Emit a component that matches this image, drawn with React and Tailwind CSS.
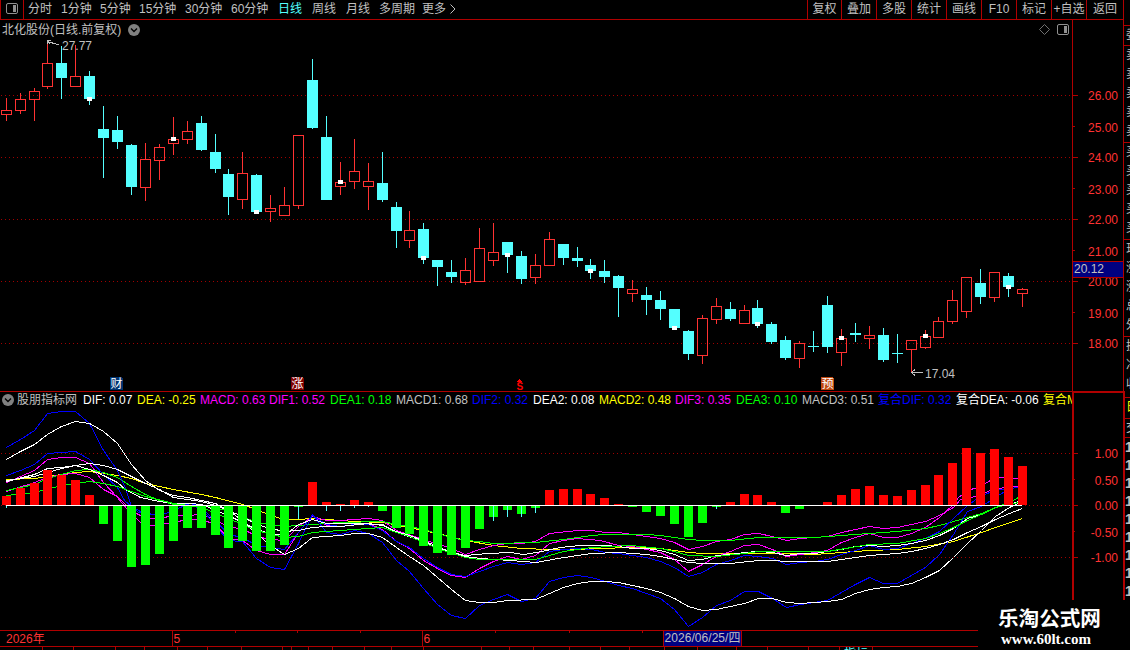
import clsx from 'clsx';

const RED = '#b00000';
const UP = '#ff3232';
const DOWN = '#54ffff';

const periods = [
  { label: '分时', width: 'w-[33px]' },
  { label: '1分钟', width: 'w-[39px]' },
  { label: '5分钟', width: 'w-[39px]' },
  { label: '15分钟', width: 'w-[46px]' },
  { label: '30分钟', width: 'w-[46px]' },
  { label: '60分钟', width: 'w-[47px]' },
  { label: '日线', width: 'w-[34px]', active: true },
  { label: '周线', width: 'w-[34px]' },
  { label: '月线', width: 'w-[33px]' },
  { label: '多周期', width: 'w-[43px]' },
  { label: '更多', width: 'w-[27px]' },
];

const tools = [
  { label: '复权', width: 'w-[34px]' },
  { label: '叠加', width: 'w-[35px]' },
  { label: '多股', width: 'w-[35px]' },
  { label: '统计', width: 'w-[35px]' },
  { label: '画线', width: 'w-[35px]' },
  { label: 'F10', width: 'w-[35px]' },
  { label: '标记', width: 'w-[35px]' },
  { label: '+自选', width: 'w-[35px]' },
  { label: '返回', width: 'w-[38px] border-r' },
];

const indicators = [
  { text: 'DIF: 0.07', cls: 'w-[54px] text-white' },
  { text: 'DEA: -0.25', cls: 'w-[63px] text-[#ffff00]' },
  { text: 'MACD: 0.63', cls: 'w-[69px] text-[#ff00ff]' },
  { text: 'DIF1: 0.52', cls: 'w-[61px] text-[#ff00ff]' },
  { text: 'DEA1: 0.18', cls: 'w-[66px] text-[#00ff00]' },
  { text: 'MACD1: 0.68', cls: 'w-[76px] text-[#c0c0c0]' },
  { text: 'DIF2: 0.32', cls: 'w-[61px] text-[#0000ff]' },
  { text: 'DEA2: 0.08', cls: 'w-[66px] text-white' },
  { text: 'MACD2: 0.48', cls: 'w-[76px] text-[#ffff00]' },
  { text: 'DIF3: 0.35', cls: 'w-[61px] text-[#ff00ff]' },
  { text: 'DEA3: 0.10', cls: 'w-[66px] text-[#00ff00]' },
  { text: 'MACD3: 0.51', cls: 'w-[76px] text-[#c0c0c0]' },
  { text: '复合DIF: 0.32', cls: 'w-[78px] text-[#0000ff]' },
  { text: '复合DEA: -0.06', cls: 'w-[87px] text-white' },
  { text: '复合MACD', cls: 'w-[80px] text-[#ffff00]' },
];

// [up, high, bodyTop, bodyBottom, low, marker]
const candles = [
  [1, 98, 110, 114, 120], [1, 93, 99, 110, 113], [1, 88, 91, 99, 120], [1, 41, 63, 86, 88],
  [0, 46, 63, 77, 98], [1, 45, 76, 86, 86], [0, 71, 76, 98, 104, 97], [0, 106, 129, 137, 177],
  [0, 116, 130, 141, 148], [0, 144, 145, 186, 194], [1, 143, 159, 187, 200], [1, 144, 147, 160, 179],
  [1, 117, 139, 143, 154, 137], [1, 121, 131, 139, 143], [0, 116, 123, 149, 150], [0, 134, 152, 168, 172],
  [0, 169, 174, 196, 214], [1, 152, 173, 199, 208], [0, 174, 175, 211, 211, 210], [1, 195, 208, 211, 221],
  [1, 187, 205, 215, 215], [1, 135, 135, 205, 208], [0, 59, 80, 127, 128], [0, 116, 137, 199, 199],
  [1, 162, 182, 186, 194, 180], [1, 139, 171, 181, 188], [1, 163, 181, 186, 209], [0, 152, 183, 199, 201],
  [0, 202, 207, 230, 247], [1, 211, 230, 240, 247], [0, 223, 229, 257, 263, 256], [0, 260, 260, 266, 285],
  [0, 260, 272, 276, 282], [1, 258, 270, 282, 284], [1, 228, 248, 281, 281], [1, 223, 252, 260, 265],
  [0, 242, 242, 254, 272, 253], [0, 251, 256, 278, 283], [1, 254, 265, 277, 283], [1, 232, 239, 265, 265],
  [0, 244, 244, 257, 264], [0, 247, 258, 260, 266], [0, 259, 265, 270, 278, 269], [0, 260, 271, 276, 282],
  [0, 275, 276, 287, 316], [1, 280, 289, 293, 301], [0, 287, 295, 299, 314], [0, 291, 300, 308, 319],
  [0, 309, 309, 327, 327, 326], [0, 330, 331, 353, 359], [1, 315, 318, 355, 363], [1, 298, 306, 319, 323],
  [0, 302, 309, 318, 320], [1, 305, 310, 323, 323], [0, 300, 308, 323, 327, 322], [0, 322, 324, 341, 343],
  [0, 336, 340, 357, 359], [1, 341, 343, 358, 367], [0, 331, 346, 346, 351], [0, 296, 305, 346, 352],
  [1, 329, 338, 352, 365, 336], [0, 323, 333, 334, 341], [1, 326, 335, 338, 348], [0, 328, 335, 359, 361],
  [0, 334, 353, 353, 362], [1, 340, 340, 349, 371], [1, 330, 336, 347, 348, 334], [1, 317, 321, 337, 337],
  [1, 290, 300, 321, 323], [1, 277, 277, 311, 317], [0, 269, 283, 296, 303], [1, 272, 272, 297, 301],
  [0, 273, 276, 286, 296, 285], [1, 288, 289, 293, 306],
];

// end of every histogram bar, the zero line lies at 505
const bars = [
  496, 488, 483, 470, 475, 480, 495, 524, 541, 567, 565, 554, 541, 528, 528, 535, 548, 541, 551,
  551, 545, 507, 482, 502, 504, 500, 502, 511, 528, 534, 546, 553, 555, 548, 529, 517, 510, 514,
  508, 490, 489, 489, 494, 498, 504, 507, 512, 516, 524, 537, 523, 507, 502, 494, 495, 502, 513,
  509, 505, 502, 495, 489, 486, 495, 496, 490, 485, 475, 463, 448, 453, 449, 457, 466,
];

const needles = { 0: 508, 21: 519, 23: 511, 24: 511, 25: 508, 26: 507, 35: 521, 36: 517, 37: 517, 38: 513, 51: 509 };

const curves = [
  { color: '#ffff00', points: '6,479 34,478 47,476 75,472 89,471 103,473 117,475 131,478 145,483 159,486 173,489 201,494 215,497 242,504 256,509 270,515 284,519 298,519 312,518 326,519 354,521 382,522 409,527 437,533 465,540 493,545 521,548 549,549 577,549 600,548 630,547 660,548 688,552 702,553 744,553 786,553 814,554 841,552 869,550 897,549 925,546 953,541 981,532 995,527 1022,518' },
  { color: '#ff00ff', points: '6,482 20,476 34,470 47,459 61,457 75,457 89,463 103,482 117,497 131,514 145,526 159,524 173,522 187,519 201,519 215,524 228,538 242,540 256,550 270,554 284,554 298,532 312,515 326,525 340,526 368,523 382,529 396,541 409,548 423,560 437,568 451,575 465,577 479,568 493,561 507,556 521,559 535,555 549,543 563,540 577,538 600,540 618,545 632,546 646,549 660,552 674,559 688,571 702,564 716,556 730,551 744,545 758,544 772,549 786,556 800,554 814,552 827,550 841,542 855,537 869,533 883,537 897,537 911,533 925,527 939,517 953,504 958,497 967,490 977,487 990,480 1000,477 1018,478' },
  { color: '#ff00ff', points: '6,491 34,482 47,477 61,474 75,473 89,477 103,489 117,496 131,510 145,518 159,518 173,515 187,515 201,514 215,519 228,527 242,528 256,536 270,539 284,540 298,526 312,516 326,520 340,520 368,518 382,520 396,530 423,539 451,548 465,554 479,549 493,545 507,543 521,543 535,541 549,533 577,530 591,530 605,532 618,532 646,536 660,538 674,542 688,549 702,546 716,541 730,539 744,534 758,533 772,536 786,540 800,538 827,536 841,532 855,529 869,526 883,528 897,527 911,524 925,521 939,515 953,507 960,499 975,496 990,490 1004,487 1018,486' },
  { color: '#00ff00', points: '6,490 34,484 47,478 61,474 75,470 89,469 103,472 117,477 131,486 145,494 159,500 173,504 201,505 228,510 242,516 256,522 284,526 312,524 340,522 382,521 396,524 409,526 423,529 437,533 451,537 465,540 479,541 493,543 535,542 563,539 591,535 605,534 646,534 660,535 674,537 688,539 702,540 730,540 758,537 786,537 814,537 841,535 869,533 897,531 925,528 939,525 953,521 967,517 981,513 995,507 1009,502 1018,497' },
  { color: '#0000ff', points: '6,475 20,470 34,464 47,453 61,452 75,451 89,459 103,474 117,487 124,500 131,506 140,511 152,514 165,513 173,510 187,504 201,508 215,520 228,534 242,537 256,545 270,547 284,549 298,532 312,515 326,524 340,526 354,524 368,524 382,530 396,541 409,547 423,558 437,567 451,574 465,576 479,571 493,566 507,562 521,564 535,562 549,551 563,549 577,548 591,549 605,552 618,553 632,555 646,557 660,561 674,567 688,576 702,572 716,564 730,560 744,555 758,556 772,558 786,564 800,562 814,561 827,559 841,554 855,550 869,545 883,549 897,548 911,543 925,538 939,531 953,518 967,505 981,495 995,490 1009,488 1018,487' },
  { color: '#0000ff', points: '6,447 20,439 34,430 47,413 61,411 75,411 89,423 103,450 117,470 125,488 131,506 138,512 150,514 165,513 180,507 187,503 195,504 205,513 215,525 225,537 236,541 242,541 256,558 270,567 284,569 298,543 312,514 326,532 340,534 354,530 368,533 382,542 396,560 409,571 423,588 437,604 451,615 465,618 479,605 493,599 507,594 521,601 535,598 549,581 563,577 577,575 591,577 605,581 618,585 632,588 646,593 660,598 674,609 688,626 702,617 716,605 730,600 744,591 758,591 772,598 786,607 800,604 827,600 841,592 855,584 869,577 883,583 897,583 911,575 925,567 939,554 953,534 967,511 981,506 995,497 1009,488 1018,487' },
  { color: '#ffffff', points: '6,459 20,451 34,444 47,434 61,426 75,421 89,423 103,431 117,443 131,464 145,480 159,490 173,495 187,497 201,500 215,503 228,510 242,520 256,533 270,545 284,554 298,548 312,537 326,536 340,535 354,533 368,533 382,537 396,547 409,556 423,565 437,577 451,589 465,600 479,602 493,602 507,600 535,599 549,593 563,587 577,583 591,581 605,581 618,582 632,585 646,588 660,592 674,598 688,606 702,610 716,609 730,606 744,603 758,598 772,598 786,602 800,603 827,601 841,599 855,593 869,589 883,587 897,586 911,583 925,577 939,570 953,557 967,543 981,530 995,516 1009,507 1018,503' },
  { color: '#ffffff', points: '6,480 20,478 34,476 47,472 61,468 75,465 89,463 103,465 117,469 131,476 145,483 159,489 173,497 201,501 215,505 228,510 242,516 256,524 270,528 284,531 298,530 312,527 326,526 340,526 368,523 382,525 396,531 409,535 423,540 437,546 451,552 465,556 480,558 510,560 536,562 557,558 591,553 618,552 632,553 646,554 660,556 674,559 688,562 702,563 730,563 758,560 772,560 786,561 827,561 841,559 869,555 897,553 911,551 925,548 939,544 953,539 967,532 981,526 995,519 1009,513 1022,508' },
  { color: '#ffffff', points: '6,481 34,474 47,468 61,467 75,465 89,469 103,475 117,482 125,489 140,497 159,501 173,503 190,503 201,504 228,515 242,522 256,529 270,533 284,535 298,524 312,519 326,523 354,523 382,524 396,532 423,541 437,548 451,552 465,555 487,553 510,552 523,554 536,552 560,547 580,545 605,545 618,546 632,548 646,548 660,550 674,554 688,560 702,559 716,555 730,554 744,552 758,551 772,552 786,555 800,553 814,553 827,551 841,549 855,546 869,545 883,546 897,545 911,543 925,540 939,535 953,528 967,518 981,514 995,507 1009,504 1018,501' },
  { color: '#00ff00', points: '6,495 34,492 61,485 89,481 103,483 117,486 131,491 145,496 173,503 201,507 228,518 256,530 284,537 298,536 312,532 340,530 382,527 396,532 409,536 437,548 465,557 479,559 535,559 563,551 591,547 630,545 660,548 674,551 688,555 716,556 744,553 758,551 800,551 827,551 869,544 897,543 925,538 939,533 953,527 967,520 981,514 995,507 1018,502' },
];

const priceLabels = [
  ['26.00', 95, 100], ['25.00', 126, 132], ['24.00', 157, 162], ['23.00', 188, 194], ['22.00', 219, 224],
  ['21.00', 250, 256], ['20.00', 281, 286], ['19.00', 312, 318], ['18.00', 343, 348],
];

const macdLabels = [
  ['1.00', 453, 458], ['0.50', 479, 485], ['0.00', 505, 510], ['-0.50', 531, 537], ['-1.00', 557, 562],
];

const quoteGroups = [
  { cls: 'h-[26px]', rows: [] },
  { cls: 'h-[20px]', rows: ['委'] },
  { cls: 'h-[97px]', rows: ['卖', '卖', '卖', '卖', '卖'] },
  { cls: 'h-[97px]', rows: ['买', '买', '买', '买', '买'] },
  { cls: 'h-[97px]', rows: ['现', '涨', '涨', '总', '外'] },
  { cls: 'h-[61px]', rows: ['换', '净', '收'] },
  { cls: 'h-[21px] text-[#ffff00]', rows: ['日'] },
  { cls: 'h-[19px]', rows: ['交'] },
];

const footerTabs = [
  'w-[43px]', 'w-[31px]', 'w-[42px]', 'w-[29px]', 'w-[33px]', 'w-[30px]', 'w-[34px]', 'w-[41px]', 'w-[9px]',
  'w-[17px]', 'w-[24px]', 'w-[32px]', 'w-[27px]', 'w-[32px]', 'w-[58px]', 'w-[28px]', 'w-[24px]', 'w-[36px]',
  'w-[31px]', 'w-[29px]', 'w-[35px]', 'w-[33px]', 'w-[39px]', 'w-[31px]', 'w-[41px]', 'w-[31px]', 'w-[33px]',
];

const candleX = (i) => Math.floor(6.2 + i * 13.922);

const ChevronBadge = () => (
  <svg width="12" height="12" viewBox="0 0 12 12" className="shrink-0">
    <circle cx="6" cy="6" r="6" fill="#808080" />
    <path d="M3 4.5 L6 7.5 L9 4.5" fill="none" stroke="#000" strokeWidth="1.4" />
  </svg>
);

const PanelIcon = () => (
  <svg width="12" height="12" viewBox="0 0 12 12" className="shrink-0">
    <rect x="0.5" y="0.5" width="11" height="10" rx="1.5" fill="none" stroke="#909090" />
    <rect x="7" y="2" width="3" height="7" fill="#909090" />
  </svg>
);

const Toolbar = () => (
  <div className="flex h-5 shrink-0 border-b border-[#b00000] text-[12px] leading-[19px] text-[#c0c0c0]">
    <div className="flex w-6 items-center justify-center border-x border-[#b00000] pb-px">
      <PanelIcon />
    </div>
    <div className="flex flex-1 pl-1">
      {periods.map((p) => (
        <span key={p.label} className={clsx('shrink-0 whitespace-nowrap', p.width, p.active && 'text-[#54ffff]')}>
          {p.label}
        </span>
      ))}
      <svg width="8" height="10" viewBox="0 0 8 10" className="mt-1">
        <path d="M1.5 0.5 L6 5 L1.5 9.5" fill="none" stroke="#c0c0c0" />
      </svg>
    </div>
    <div className="flex">
      {tools.map((t) => (
        <span key={t.label} className={clsx('shrink-0 whitespace-nowrap border-l border-[#b00000] text-center', t.width)}>
          {t.label}
        </span>
      ))}
    </div>
  </div>
);

const GridLines = ({ levels }) =>
  levels.map((y) => (
    <line key={y} x1="1" x2="1072" y1={y + 0.5} y2={y + 0.5} stroke="#a00000" strokeDasharray="1 3" />
  ));

const Tag = ({ x, fill, text }) => (
  <g>
    <path d={`M${x} 377 h11 l2 2 v11 h-13 z`} fill={fill} />
    <text x={x + 0.5} y="388" fontSize="12" fill="#fff">{text}</text>
  </g>
);

const PriceChart = () => (
  <svg width="1072" height="353" viewBox="0 38 1072 353" className="block" shapeRendering="crispEdges">
    <GridLines levels={[95, 157, 219, 281, 343]} />
    {candles.map(([up, high, top, bottom, low, marker], i) => {
      const x = candleX(i);
      const color = up ? UP : DOWN;
      return (
        <g key={i}>
          {top > high && <rect x={x} y={high} width="1" height={top - high} fill={color} />}
          {low > bottom && <rect x={x} y={bottom + 1} width="1" height={low - bottom} fill={color} />}
          {up ? (
            <rect x={x - 4.5} y={top + 0.5} width="10" height={bottom - top} fill="none" stroke={color} />
          ) : (
            <rect x={x - 5} y={top} width="11" height={bottom - top + 1} fill={color} />
          )}
          {marker && <rect x={x - 2} y={marker} width="5" height="4" fill="#fff" />}
        </g>
      );
    })}
    <g fill="none" stroke="#c0c0c0">
      <path d="M47.5 41.5 L59 45 M51 40.5 H47.5 V44 M48 42 L50 44" />
      <path d="M911.5 372.5 H923 M915 369.5 L911.5 372.5 L915 375.5" />
    </g>
    <g fill="#c0c0c0" fontSize="12">
      <text x="62" y="50">27.77</text>
      <text x="925" y="378">17.04</text>
    </g>
    <Tag x={110} fill="#003370" text="财" />
    <Tag x={291} fill="#800000" text="涨" />
    <path d="M519.5 379 l2.5 2.5 h-5 z" fill="#ff0000" />
    <text x="516.5" y="390" fontSize="10" fontWeight="bold" fill="#ff0000">S</text>
    <Tag x={821} fill="#c04810" text="预" />
  </svg>
);

const MacdChart = () => (
  <svg width="1072" height="222" viewBox="0 408 1072 222" className="block" shapeRendering="crispEdges">
    <GridLines levels={[453, 505, 557]} />
    {curves.map((c, i) => (
      <polyline key={i} points={c.points} transform="translate(0.5 0.5)" fill="none" stroke={c.color} />
    ))}
    {bars.map((y, i) => (
      <rect
        key={i}
        x={candleX(i) - 4}
        y={Math.min(y, 505)}
        width="9"
        height={Math.abs(y - 505)}
        fill={y < 505 ? '#ff0000' : '#00ff00'}
      />
    ))}
    {Object.entries(needles).map(([i, y]) => (
      <rect key={i} x={candleX(Number(i))} y="506" width="1" height={y - 506} fill={DOWN} />
    ))}
    <rect x="6" y="505" width="1016" height="1" fill="#fff" />
  </svg>
);

const AxisLabels = ({ labels, major }) =>
  labels.map(([label, tick, baseline]) => (
    <g key={label}>
      <rect x="1073" y={tick} width={major.includes(label) ? 5 : 2} height="1" fill={RED} />
      <text x="1118" y={baseline} textAnchor="end" fontSize="12" fill={UP}>{label}</text>
    </g>
  ));

const PriceAxis = () => (
  <div className="relative w-[52px] shrink-0 border-x border-[#b00000]">
    <svg width="50" height="371" viewBox="1073 20 50 371" className="block">
      <AxisLabels labels={priceLabels} major={['26.00', '24.00', '22.00', '20.00', '18.00']} />
    </svg>
    <div className="absolute left-0 top-[241px] h-[17px] w-[50px] border-y border-[#b00000] bg-[#000080] pl-px text-[12px] leading-[15px] text-[#c0c0c0]">
      20.12
    </div>
  </div>
);

const MacdAxis = () => (
  <div className="h-[209px] w-[53px] shrink-0 border-2 border-b-0 border-[#b00000]">
    <svg width="49" height="206" viewBox="1074 393 49 206" className="block">
      <AxisLabels labels={macdLabels} major={['1.00', '0.00', '-1.00']} />
    </svg>
  </div>
);

const QuoteStrip = () => (
  <div className="w-[6px] shrink-0 overflow-hidden text-[12px] leading-[19px] text-[#c0c0c0]">
    {quoteGroups.map((g, i) => (
      <div key={i} className={clsx('overflow-hidden border-b border-[#b00000] pl-[2px]', g.cls)}>
        {g.rows.map((row, j) => (
          <div key={j} className="w-4">{row}</div>
        ))}
      </div>
    ))}
    <div className="pl-[1px] text-[14px] font-bold leading-[18px]">
      {['14', '14', '14', '14', '14', '14', '14', '14', '14'].map((t, i) => (
        <div key={i}>{t}</div>
      ))}
    </div>
  </div>
);

const TimeAxis = () => (
  <div className="h-[17px] w-[978px] shrink-0 border-y border-[#b00000]">
    <svg width="978" height="15" viewBox="0 631 978 15" className="block">
      {[235, 297, 360, 495, 569, 642].map((x) => (
        <rect key={x} x={x} y="631" width="1" height="2" fill={RED} />
      ))}
      <rect x="172" y="631" width="1" height="15" fill={RED} />
      <rect x="422" y="631" width="1" height="15" fill={RED} />
      <g fill={UP} fontSize="12">
        <text x="6" y="643">2026年</text>
        <text x="173.5" y="643">5</text>
        <text x="423.5" y="643">6</text>
      </g>
      <rect x="663" y="631" width="79" height="15" fill="#000080" />
      <rect x="663" y="631" width="1" height="15" fill={RED} />
      <rect x="741" y="631" width="1" height="15" fill={RED} />
      <text x="664.5" y="642" fontSize="12" fill="#c0c0c0" textLength="76">2026/06/25/四</text>
    </svg>
  </div>
);

export default function App() {
  return (
    <div className="relative flex h-[650px] w-[1130px] flex-col overflow-hidden bg-black font-['Liberation_Sans','Noto_Sans_CJK_SC',sans-serif] text-[#c0c0c0]">
      <div className="flex min-h-0 flex-1">
        <div className="flex w-[1124px] shrink-0 flex-col">
          <Toolbar />
          <div className="flex h-[371px] shrink-0">
            <div className="w-[1072px] shrink-0">
              <div className="flex h-[18px] items-center pl-[2px] pt-px text-[12px]">
                <span className="mr-[6px] w-[120px] whitespace-nowrap">北化股份(日线.前复权)</span>
                <ChevronBadge />
                <svg width="11" height="11" viewBox="0 0 11 11" className="ml-auto mr-[7px]">
                  <path d="M5.5 0.5 L10.5 5.5 L5.5 10.5 L0.5 5.5 Z" fill="none" stroke="#707070" />
                </svg>
                <div className="mr-[3px]">
                  <PanelIcon />
                </div>
              </div>
              <PriceChart />
            </div>
            <PriceAxis />
          </div>
          <div className="flex h-[239px] shrink-0">
            <div className="w-[1072px] shrink-0 overflow-hidden border-t border-[#b00000]">
              <div className="flex h-4 items-center overflow-hidden pl-[2px] text-[12px] leading-4">
                <ChevronBadge />
                <span className="ml-[3px] w-[66px] shrink-0">股朋指标网</span>
                {indicators.map((item) => (
                  <span key={item.text} className={clsx('shrink-0 whitespace-nowrap', item.cls)}>{item.text}</span>
                ))}
              </div>
              <MacdChart />
            </div>
            <MacdAxis />
          </div>
          <TimeAxis />
          <div className="flex h-[3px] shrink-0 overflow-hidden text-[12px] leading-[14px]">
            {footerTabs.map((w, i) => (
              <span key={i} className={clsx('h-[3px] shrink-0 overflow-hidden whitespace-nowrap border-r border-[#b00000] text-center text-[#54ffff]', w)}>
                {i === 26 ? '指标' : ''}
              </span>
            ))}
          </div>
        </div>
        <QuoteStrip />
      </div>

      {/* Site watermark */}
      <div className="absolute bottom-0 right-0 h-[50px] w-[152px] bg-black pl-5 pt-[7px] text-white">
        <div className="text-[20.6px] font-bold leading-6">乐淘公式网</div>
        <div className="pl-[3px] font-['Liberation_Serif',serif] text-[15px] font-bold leading-4">www.60lt.com</div>
      </div>
    </div>
  );
}
